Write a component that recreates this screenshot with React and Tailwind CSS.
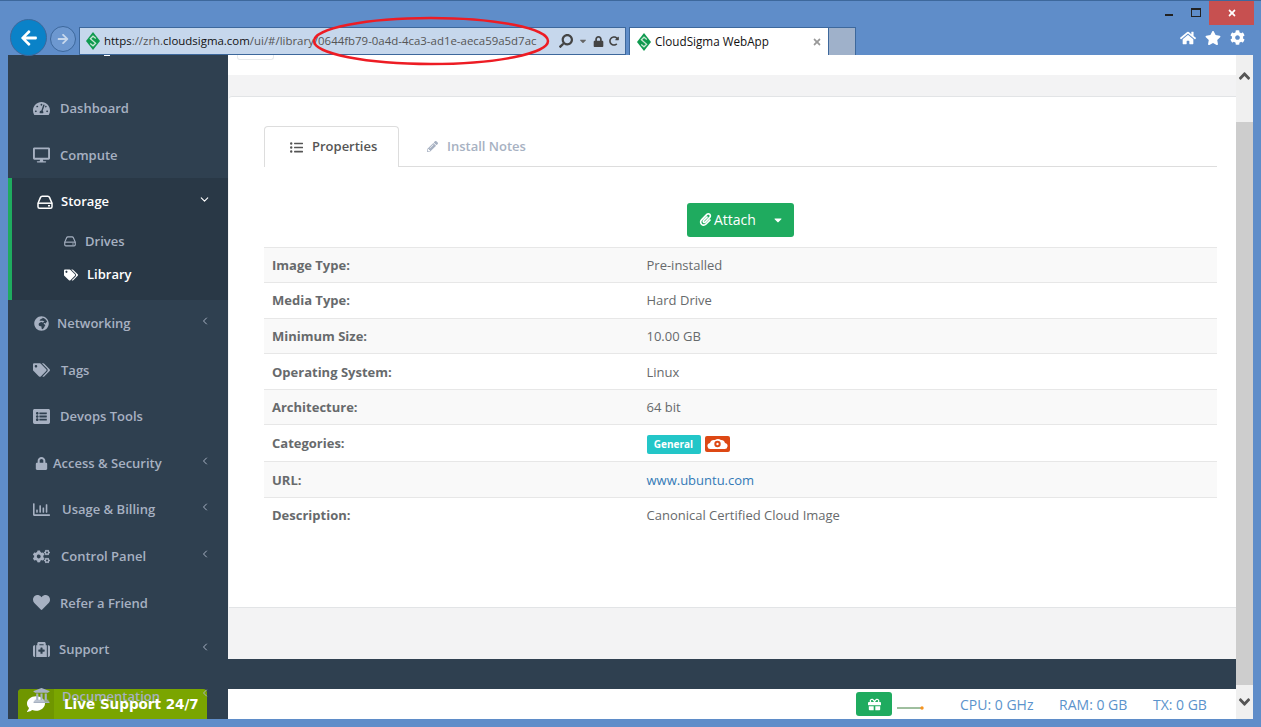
import React from "react";
import {
  FaTachometerAlt, FaDesktop, FaTags, FaGlobeAfrica, FaListAlt, FaLock, FaRegChartBar, FaCogs,
  FaHeart, FaMedkit, FaUniversity, FaComment, FaGift, FaPaperclip, FaPencilAlt, FaListUl, FaAngleDown,
  FaAngleUp, FaArrowLeft, FaArrowRight, FaHome, FaStar, FaCog, FaSearch, FaCaretDown, FaRedoAlt, FaTimes,
} from "react-icons/fa";
import { ChevronLeft, ChevronDown } from "lucide-react";

const Logo = () => (
  <svg width="14" height="18" viewBox="0 0 14 18" className="shrink-0">
    <path d="M7 0L14 9L7 18L0 9z" fill="#0f9a4f" />
    <path d="M9.8 6.4L7 4.2L4.4 6.8L9.6 11.2L7 13.8L4.2 11.6" fill="none" stroke="#c6e6d2" strokeWidth="1.3" />
  </svg>
);

const Hdd = ({ size }) => (
  <svg width={size} height={size * 0.9} viewBox="0 0 16 14" fill="none" stroke="currentColor" strokeWidth="1.5" className="shrink-0">
    <path d="M1 8L3.5 2.2Q4 1 5.2 1H10.8Q12 1 12.5 2.2L15 8V11.5Q15 13 13.5 13H2.5Q1 13 1 11.5z" />
    <path d="M1 8H15" />
    <path d="M11 10.5H13" />
  </svg>
);

const navItems = [
  { label: "Dashboard", icon: <FaTachometerAlt size={17} />, ml: "ml-[10px]" },
  { label: "Compute", icon: <FaDesktop size={18} />, ml: "ml-[10px] translate-y-px" },
  { label: "Networking", icon: <FaGlobeAfrica size={15} />, ml: "ml-[7px]", arrow: true },
  { label: "Tags", icon: <FaTags size={18} />, ml: "ml-[11px] translate-y-px" },
  { label: "Devops Tools", icon: <FaListAlt size={17} />, ml: "ml-[10px]" },
  { label: "Access & Security", icon: <FaLock size={13} />, ml: "ml-[3px] translate-y-px", arrow: true },
  { label: "Usage & Billing", icon: <FaRegChartBar size={19} />, ml: "ml-[12px]", arrow: true },
  { label: "Control Panel", icon: <FaCogs size={19} />, ml: "ml-[11px] translate-y-px", arrow: true },
  { label: "Refer a Friend", icon: <FaHeart size={17} />, ml: "ml-[10px] translate-y-px" },
  { label: "Support", icon: <FaMedkit size={17} />, ml: "ml-[9px] translate-y-px", arrow: true },
  { label: "Documentation", icon: <FaUniversity size={19} />, ml: "ml-[12px] translate-y-px", arrow: true },
];

const rows = [
  ["Image Type:", "Pre-installed", "h-[35px] pt-[2px]"],
  ["Media Type:", "Hard Drive", "h-[36px]"],
  ["Minimum Size:", "10.00 GB", "h-[35px] pt-[2px]"],
  ["Operating System:", "Linux", "h-[36px] pt-[2px]"],
  ["Architecture:", "64 bit", "h-[35px] pt-[2px]"],
  ["Categories:", null, "h-[37px] pt-[2px]"],
  ["URL:", "www.ubuntu.com", "h-[36px] pt-[2px]"],
  ["Description:", "Canonical Certified Cloud Image", "h-[36px]"],
];

const NavItem = ({ item }) => (
  <div className="relative z-10 flex h-[46.5px] shrink-0 items-center pl-[25px] pr-[17px] text-[13px] font-semibold text-[#a7b1c2]">
    <span className="flex w-[17px] justify-center">{item.icon}</span>
    <span className={`${item.ml} flex-1`}>{item.label}</span>
    {item.arrow && <ChevronLeft size={12} strokeWidth={2} className="-mt-[5px]" />}
  </div>
);

const Chrome = () => (
  <div className="relative flex h-[55px] shrink-0 flex-col border-t border-[#3d689c]">
    <div className="flex h-[26px] items-start justify-end pr-[7px] text-[#111]">
      <div className="mt-[13px] mr-[18px] h-[2px] w-[8px] bg-[#222]" />
      <div className="mt-[7px] mr-[8px] h-[9px] w-[10px] border border-t-2 border-[#222]" />
      <div className="flex h-[24px] w-[45px] items-center justify-center bg-[#c75050] text-white">
        <FaTimes size={10} />
      </div>
    </div>
    <div className="flex h-[28px] items-stretch pl-[10px]">
      <div className="z-10 -mt-[8px] flex h-[37px] w-[37px] shrink-0 items-center justify-center rounded-full border border-[#3d689c] bg-[#0a82c8] text-white">
        <FaArrowLeft size={18} />
      </div>
      <div className="ml-[3px] mt-[-1px] flex h-[26px] w-[26px] shrink-0 items-center justify-center rounded-full border border-[#3d689c] bg-[#6d98d0] text-[#c6d7ec]">
        <FaArrowRight size={12} />
      </div>
      <div className="ml-[3px] flex w-[547px] shrink-0 items-center border border-[#3d689c] bg-[#c6d7ec] pl-[6px] pr-[6px] text-[11.45px] text-[#555]">
        <Logo />
        <span className="ml-[4px] flex-1 whitespace-nowrap">
          <span className="text-[#111]">https</span>://zrh.<span className="text-[#111]">cloudsigma.com</span>/ui/#/library/0644fb79-0a4d-4ca3-ad1e-aeca59a5d7ac
        </span>
        <FaSearch size={14} className="-scale-x-100 text-[#444]" />
        <FaCaretDown size={10} className="ml-[5px] text-[#666]" />
        <FaLock size={11} className="ml-[5px] text-[#444]" />
        <FaRedoAlt size={10} className="ml-[5px] text-[#444]" />
      </div>
      <div className="ml-[3px] flex w-[200px] shrink-0 items-center border-x border-t border-[#3d689c] bg-white pl-[7px] pr-[6px] text-[11.7px] text-[#111]">
        <Logo />
        <span className="ml-[4px] flex-1">CloudSigma WebApp</span>
        <FaTimes size={10} className="text-[#999]" />
      </div>
      <div className="w-[27px] shrink-0 border-r border-t border-[#3d689c] bg-[#9fb1ca]" />
      <div className="flex flex-1 items-center justify-end gap-[9px] pb-[7px] pr-[16px] text-white">
        <FaHome size={16} />
        <FaStar size={16} />
        <FaCog size={15} />
      </div>
    </div>
    <svg className="absolute left-[312px] top-[15px] z-20" width="238" height="50" viewBox="0 0 238 50">
      <ellipse cx="119" cy="25" rx="117" ry="23" fill="none" stroke="#ed1c24" strokeWidth="2.5" />
    </svg>
  </div>
);

const Sidebar = () => (
  <aside className="relative isolate flex w-[220px] shrink-0 flex-col overflow-hidden bg-[#2f4050] pt-[30.4px]">
    <div className="absolute left-[96px] top-0 h-[1px] w-[6px] bg-white" />
    {navItems.slice(0, 2).map((item) => <NavItem key={item.label} item={item} />)}
    <div className="h-[122px] shrink-0 border-l-4 border-[#1fab5f] bg-[#293846]">
      <div className="flex h-[47px] items-center pl-[25px] pr-[17px] text-[13px] font-semibold text-white">
        <Hdd size={16} />
        <span className="ml-[8px] flex-1">Storage</span>
        <ChevronDown size={13} strokeWidth={2} className="-mt-[5px]" />
      </div>
      <div className="flex h-[33px] items-center pl-[52px] text-[13px] font-semibold text-[#a7b1c2]">
        <Hdd size={12} />
        <span className="ml-[9px]">Drives</span>
      </div>
      <div className="flex h-[33px] items-center pl-[52px] text-[13px] font-semibold text-white">
        <FaTags size={14} />
        <span className="ml-[9px]">Library</span>
      </div>
    </div>
    {navItems.slice(2).map((item) => <NavItem key={item.label} item={item} />)}
    {/* green tab sits under the nav text, only its own label goes on top */}
    <div className="absolute bottom-0 left-[10px] flex h-[30px] w-[189px] items-center rounded-t-[4px] bg-[#7aa500] font-['DejaVu_Sans',sans-serif] text-[13.5px] font-bold text-white">
      <div className="flex h-full w-[36px] items-center justify-center rounded-tl-[4px] bg-[#6f9600]">
        <FaComment size={18} />
      </div>
      <span className="relative z-20 ml-[10px] mt-[1px] whitespace-nowrap">Live Support 24/7</span>
    </div>
  </aside>
);

const Main = () => (
  <main className="flex min-w-0 flex-1 flex-col bg-[#f3f3f4] text-[13px] text-[#676a6c]">
    <div className="h-[20px] shrink-0 bg-white pl-[9px]">
      <div className="h-[5px] w-[37px] rounded-b-[3px] border-x border-b border-[#e7eaec] bg-white" />
    </div>
    <div className="h-[21px] shrink-0" />
    <div className="ml-[1px] flex h-[512px] shrink-0 flex-col rounded-tl-[3px] border-y border-[#e2e4e6] bg-white pl-[35px] pr-[19px] pt-[29px]">
      <div className="flex h-[41px] shrink-0 border-b border-[#dddddd]">
        <div className="flex h-[41px] w-[135px] items-center rounded-t-[4px] border-x border-t border-[#dddddd] bg-white pl-[25px] font-semibold text-[#555]">
          <FaListUl size={13} />
          <span className="ml-[9px]">Properties</span>
        </div>
        <div className="flex items-center pl-[28px] pt-[1px] font-semibold text-[#a7b1c2]">
          <FaPencilAlt size={11} />
          <span className="ml-[9px]">Install Notes</span>
        </div>
      </div>
      <div className="flex h-[80px] shrink-0 items-start justify-center pt-[36px]">
        <div className="flex h-[34px] w-[107px] items-center rounded-[3px] bg-[#1fab5f] pb-[1px] pl-[12px] text-[14px] text-white">
          <FaPaperclip size={13} />
          <span className="ml-[2px] flex-1">Attach</span>
          <FaCaretDown size={12} className="mr-[10px]" />
        </div>
      </div>
      <div>
        {rows.map(([label, value, height], i) => (
          <div key={label} className={`flex items-center border-t border-[#e7e7e7] ${height} ${i % 2 === 0 ? "bg-[#f9f9f9]" : "bg-white"}`}>
            <span className="w-[374.5px] pl-[8px] font-bold">{label}</span>
            <span className="pl-[8px]">
              {label === "Categories:" ? (
                <span className="flex items-center gap-[4px]">
                  <span className="flex h-[19px] w-[54px] items-center justify-center rounded-[2px] bg-[#23c6c8] text-[10px] font-bold text-white">General</span>
                  <svg width="25" height="16" viewBox="0 0 25 16">
                    <rect width="25" height="16" rx="2" fill="#dd4814" />
                    <path d="M6 13a3 3 0 0 1-1-6 4 4 0 0 1 4-3h1a5 5 0 0 1 6 0 4 4 0 0 1 4 3 3 3 0 0 1-1 6z" fill="#fff" />
                    <circle cx="12.5" cy="8" r="3.2" fill="#dd4814" />
                    <circle cx="12.5" cy="8" r="1.2" fill="#fff" />
                  </svg>
                </span>
              ) : label === "URL:" ? (
                <span className="text-[#337ab7]">{value}</span>
              ) : value}
            </span>
          </div>
        ))}
      </div>
    </div>
    <div className="flex-1" />
    <div className="h-[30px] shrink-0 bg-[#2f4050]" />
    <div className="flex h-[30px] shrink-0 items-center bg-white pl-[628px] text-[14px] text-[#5b93cc]">
      <div className="flex h-[24px] w-[36px] items-center justify-center rounded-[3px] bg-[#1fab5f] text-white">
        <FaGift size={13} />
      </div>
      <svg width="30" height="6" viewBox="0 0 30 6" className="ml-[4px] mt-[8px]">
        <line x1="1" y1="3" x2="26" y2="3" stroke="#3e7f3e" />
        <circle cx="26" cy="3" r="1.7" fill="#f7931e" />
      </svg>
      <span className="ml-[34px]">CPU: 0 GHz</span>
      <span className="ml-[25.6px]">RAM: 0 GB</span>
      <span className="ml-[25.6px]">TX: 0 GB</span>
    </div>
  </main>
);

const Scrollbar = () => (
  <div className="flex w-[17px] shrink-0 flex-col bg-[#f0f0f0] text-[#555]">
    <div className="flex h-[67px] shrink-0 items-start justify-center pt-[12px]">
      <FaAngleUp size={18} />
    </div>
    <div className="h-[563px] shrink-0 bg-[#cdcdcd]" />
    <div className="flex flex-1 items-center justify-center">
      <FaAngleDown size={18} />
    </div>
  </div>
);

export default function App() {
  return (
    <div className="flex h-[727px] w-[1261px] flex-col overflow-hidden bg-[#5f8dc9] font-['Open_Sans',sans-serif]">
      <Chrome />
      <div className="mx-[8px] flex h-[664px] shrink-0">
        <Sidebar />
        <Main />
        <Scrollbar />
      </div>
    </div>
  );
}
